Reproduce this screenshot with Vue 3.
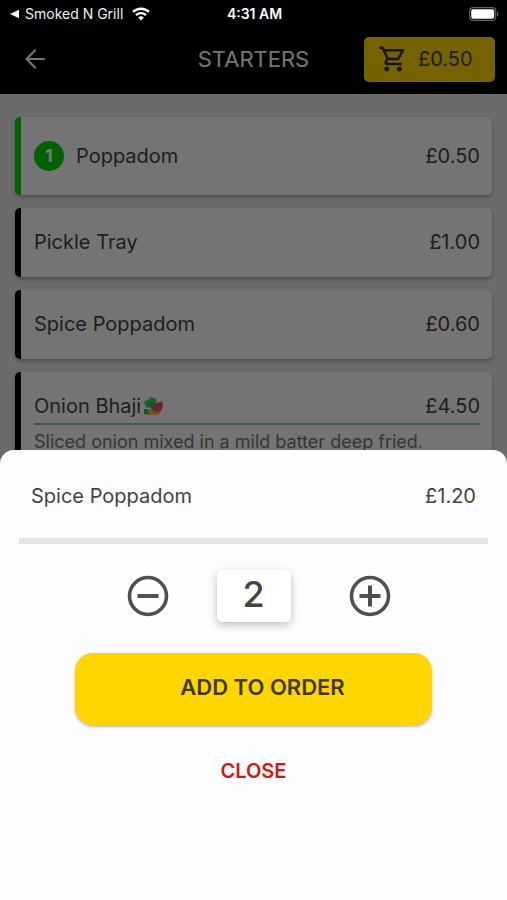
<script setup>
import { computed, ref } from 'vue'

const items = [
  { name: 'Poppadom', price: 0.5, count: 1 },
  { name: 'Pickle Tray', price: 1 },
  { name: 'Spice Poppadom', price: 0.6 },
  { name: 'Onion Bhaji', price: 4.5, veg: true, text: 'Sliced onion mixed in a mild batter deep fried.' },
]
const selected = items[2]
const quantity = ref(2)
const total = computed(() => selected.price * quantity.value)
const money = (value) => `£${value.toFixed(2)}`
const less = () => { if (quantity.value > 1) quantity.value-- }
const more = () => { quantity.value++ }
</script>

<template>
  <div class="screen">
    <div class="status">
      <a class="back-app" href="#">
        <svg class="caret" viewBox="0 0 10 10" aria-hidden="true"><path d="M0 5 9 .8v8.4z" fill="#fff" /></svg>
        <span>Smoked N Grill</span>
        <svg class="wifi" viewBox="0 0 18 14" fill="none" stroke="#fff" aria-hidden="true">
          <path d="M1 4.9a11.6 11.6 0 0 1 16 0" stroke-width="2.4" />
          <path d="M4 8.1a7.2 7.2 0 0 1 10 0" stroke-width="2.3" />
          <path d="M9 13.4 6.2 10.5a4 4 0 0 1 5.6 0z" fill="#fff" stroke="none" />
        </svg>
      </a>
      <span class="clock">4:31 AM</span>
      <svg class="battery" viewBox="0 0 30 14" aria-hidden="true">
        <rect x=".7" y=".7" width="26" height="12.6" rx="3.5" fill="none" stroke="#666" stroke-width="1.2" />
        <rect x="2.2" y="2.2" width="23" height="9.6" rx="2" fill="#fff" />
        <path d="M28 4.500c2 1 2 4 0 5z" fill="#666" />
      </svg>
    </div>

    <header class="bar">
      <button class="icon-button" aria-label="Back">
        <svg class="arrow" viewBox="0 0 20 20" fill="none" stroke="#fff" stroke-width="2.2" stroke-linecap="round" aria-hidden="true">
          <path d="M19 10H1.500M10 1.500 1.500 10l8.500 8.500" />
        </svg>
      </button>
      <h1>STARTERS</h1>
      <button class="cart">
        <svg viewBox="0 0 24 24" fill="#333" aria-hidden="true">
          <path d="M15.550 13c.75 0 1.410-.41 1.750-1.030l3.580-6.490A.996.996 0 0 0 20.010 4H5.210l-.94-2H1v2h2l3.600 7.590-1.350 2.440C4.520 15.370 5.480 17 7 17h12v-2H7l1.100-2h7.450zM6.160 6h12.150l-2.760 5H8.530L6.160 6zM7 18c-1.100 0-1.990.9-1.990 2S5.900 22 7 22s2-.9 2-2-.9-2-2-2zm10 0c-1.100 0-1.990.9-1.990 2s.89 2 1.990 2 2-.9 2-2-.9-2-2-2z" />
        </svg>
        <span>{{ money(0.5) }}</span>
      </button>
    </header>

    <main class="menu">
      <article v-for="item in items" :key="item.name" class="card" :class="{ added: item.count }">
        <div class="row">
          <span v-if="item.count" class="count">{{ item.count }}</span>
          <h2>{{ item.name }}</h2>
          <svg v-if="item.veg" class="veg" viewBox="0 0 20 18" aria-hidden="true">
            <path d="M1 4 5 3 7 0l4 1 3 2-1 4-4 3-5 1-2-3z" fill="#43d55c" />
            <path d="M2 13 9 12l9 1-1 4-12 1-4-1z" fill="#f0b83c" />
            <path d="M10 7l4-1 5-2 1 5-2 5-6 1-4-4z" fill="#f05058" />
            <path d="M1 12l4 0 1 5-5 0zM5 5l3 2 3 4 2-4" fill="#39b04c" />
            <path d="m6 7 3 4 3-5" fill="none" stroke="#28a99b" stroke-width="2" />
          </svg>
          <span class="price">{{ money(item.price) }}</span>
        </div>
        <p v-if="item.text">{{ item.text }}</p>
      </article>
    </main>

    <div class="shade"></div>

    <section class="sheet" role="dialog" aria-label="Spice Poppadom">
      <div class="summary">
        <h2>{{ selected.name }}</h2>
        <span>{{ money(total) }}</span>
      </div>
      <div class="stepper">
        <button class="icon-button" aria-label="Remove one" @click="less">
          <svg class="round" viewBox="0 0 42 42" fill="none" stroke="#505050" aria-hidden="true">
            <circle cx="21" cy="21" r="18.5" stroke-width="3.6" />
            <path d="M10.500 21h21" stroke-width="4" />
          </svg>
        </button>
        <output class="quantity">{{ quantity }}</output>
        <button class="icon-button" aria-label="Add one" @click="more">
          <svg class="round" viewBox="0 0 42 42" fill="none" stroke="#505050" aria-hidden="true">
            <circle cx="21" cy="21" r="18.5" stroke-width="3.6" />
            <path d="M10.500 21h21M21 10.500v21" stroke-width="4" />
          </svg>
        </button>
      </div>
      <button class="add">ADD TO ORDER</button>
      <button class="close">CLOSE</button>
    </section>
  </div>
</template>

<style>
body {
  margin: 0;
  background: #000;
}
</style>

<style scoped>
.screen {
  position: relative;
  display: flex;
  flex-direction: column;
  height: 100vh;
  overflow: hidden;
  background: #eaeaea;
  color: #444;
  font-family: Inter, "Liberation Sans", sans-serif;
  font-size: 20px;
  line-height: 24px;
}

h1,
h2,
p {
  margin: 0;
  font-size: inherit;
  font-weight: 400;
}

button {
  padding: 0;
  border: 0;
  background: none;
  color: inherit;
  font: inherit;
  cursor: pointer;
}

svg {
  display: block;
  flex: none;
}

.status {
  position: relative;
  z-index: 2;
  display: grid;
  grid-template-columns: 1fr auto 1fr;
  align-items: center;
  height: 28px;
  padding: 0 8px 0 10px;
  background: #000;
  color: #fff;
  font-size: 14px;
  line-height: 20px;
}

.back-app {
  display: flex;
  align-items: center;
  gap: 5px;
  color: #f0f0f0;
  text-decoration: none;
}

.caret {
  width: 10px;
  height: 10px;
}

.wifi {
  width: 18px;
  height: 14px;
  margin-left: 4px;
}

.clock {
  font-weight: 600;
}

.battery {
  justify-self: end;
  width: 30px;
  height: 14px;
}

.bar {
  display: grid;
  grid-template-columns: 1fr auto 1fr;
  align-items: center;
  flex: none;
  height: 66px;
  padding: 0 12px 4px;
  box-sizing: border-box;
  background: #000;
}

.bar h1 {
  color: #fff;
  font-size: 22px;
}

.icon-button {
  display: flex;
  justify-self: start;
}

.bar .icon-button {
  padding-left: 13px;
}

.arrow {
  width: 20px;
  height: 20px;
}

.cart {
  display: flex;
  align-items: center;
  justify-self: end;
  gap: 10px;
  width: 131px;
  height: 45px;
  padding-left: 14px;
  border-radius: 5px;
  background: #ffd600;
}

.cart svg {
  width: 30px;
  height: 30px;
}

.menu {
  display: flex;
  flex-direction: column;
  gap: 13px;
  padding: 23px 15px;
}

.card {
  padding: 22px 12px 23px 13px;
  border-left: 6px solid #000;
  border-radius: 5px;
  background: #fcfcfc;
  box-shadow: 0 2px 4px rgba(0, 0, 0, 0.3);
}

.card.added {
  padding-block: 24px;
  border-left-color: #00d400;
}

.row {
  display: flex;
  align-items: center;
}

.count {
  width: 30px;
  margin-right: 12px;
  border-radius: 50%;
  background: #00d400;
  color: #fff;
  font-size: 18px;
  font-weight: 700;
  line-height: 30px;
  text-align: center;
}

.veg {
  width: 20px;
  height: 18px;
  margin-left: 2px;
}

.price {
  margin-left: auto;
}

.card p {
  margin-top: 5px;
  padding-top: 5px;
  border-top: 2px solid #8ec498;
  color: #777;
  font-size: 18px;
  white-space: nowrap;
}

.shade {
  position: absolute;
  inset: 0;
  background: rgba(0, 0, 0, 0.54);
}

.sheet {
  position: absolute;
  inset: 50% 0 0;
  display: flex;
  flex-direction: column;
  align-items: center;
  padding: 0 19px;
  border-radius: 14px 14px 0 0;
  background: #fdfdfd;
}

.summary {
  display: flex;
  align-self: stretch;
  justify-content: space-between;
  padding: 34px 12px 30px;
  border-bottom: 6px solid #e4e4e4;
}

.stepper {
  display: flex;
  align-items: center;
  margin-top: 26px;
}

.round {
  width: 42px;
  height: 42px;
}

.quantity {
  width: 74px;
  margin: 0 58px 0 48px;
  padding-bottom: 4px;
  border-radius: 5px;
  background: #fff;
  box-shadow: 0 3px 8px rgba(0, 0, 0, 0.25);
  font-size: 36px;
  font-weight: 500;
  line-height: 48px;
  text-align: center;
}

.stepper {
  padding-left: 10px;
}

.add {
  width: 76%;
  height: 72px;
  margin-top: 31px;
  padding: 0 0 4px 18px;
  border-radius: 18px;
  background: #ffd600;
  box-shadow: 0 2px 3px rgba(0, 0, 0, 0.25);
  color: #3f3710;
  font-size: 22px;
  font-weight: 600;
}

.close {
  margin-top: 34px;
  color: #d61616;
  font-weight: 600;
}
</style>
